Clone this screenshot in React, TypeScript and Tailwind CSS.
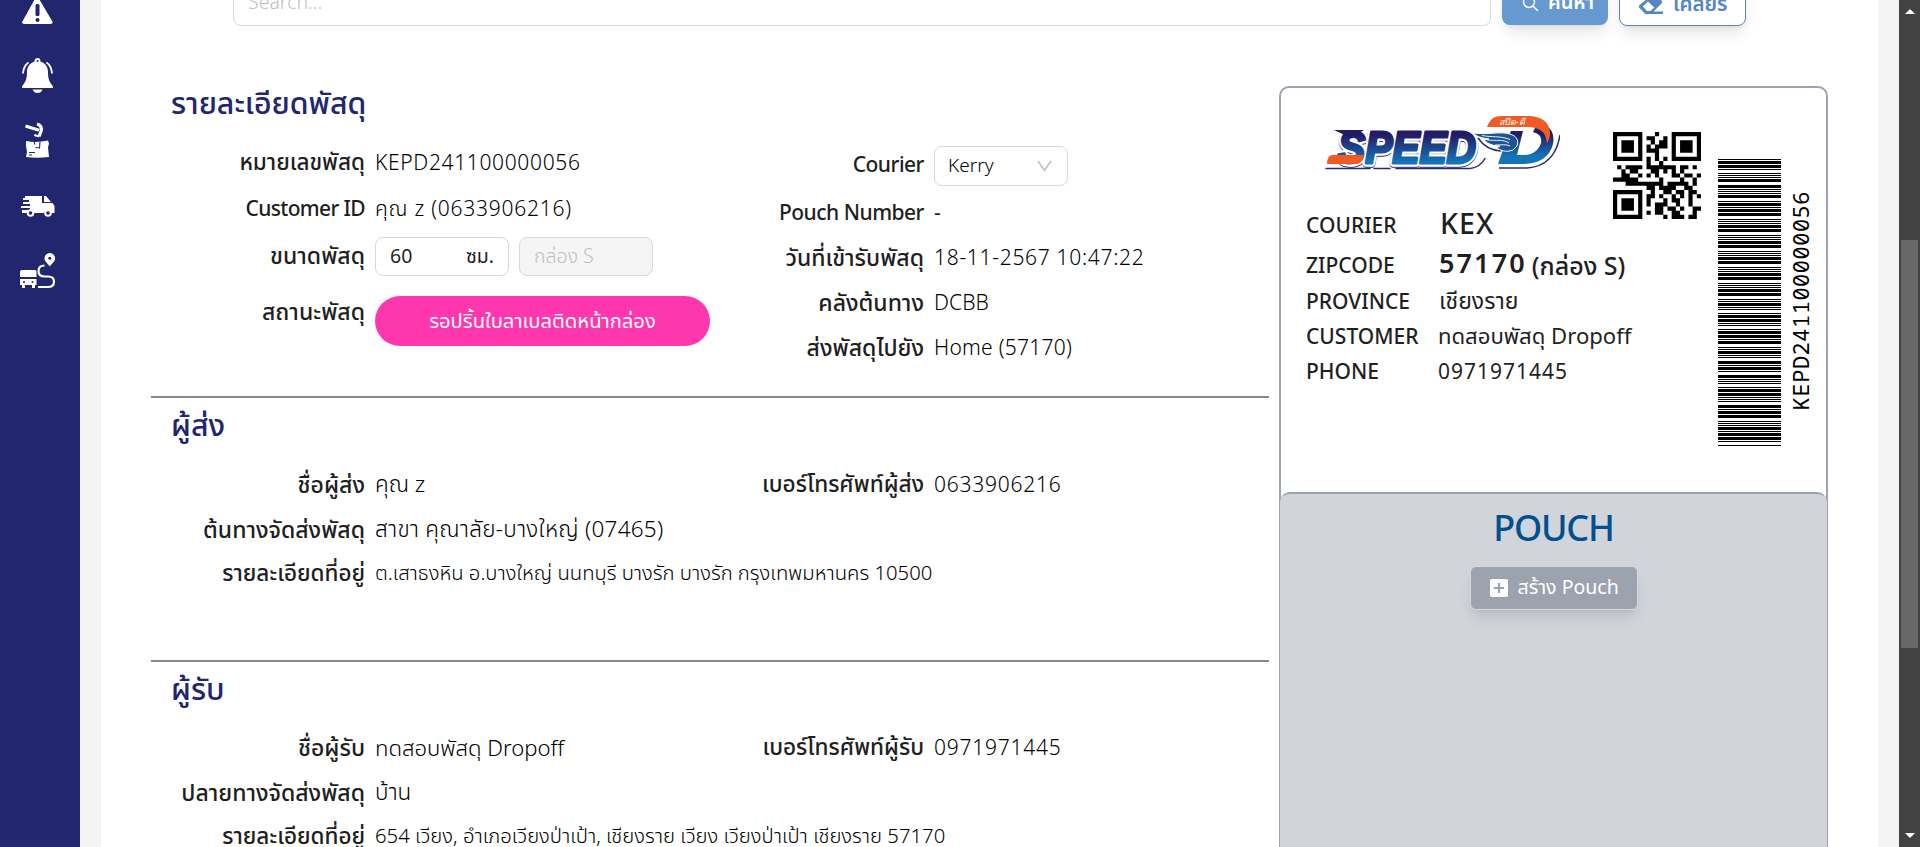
import type { ReactNode } from 'react';

const FONT = "font-['Noto_Sans','Noto_Sans_Thai',sans-serif]";

/* ---------- QR code (version 1, level Q, mask 6) ---------- */

const ALNUM = '0123456789ABCDEFGHIJKLMNOPQRSTUVWXYZ $%*+-./:';

function gfMul(a: number, b: number): number {
  let z = 0;
  for (let i = 7; i >= 0; i--) {
    z = (z << 1) ^ ((z >>> 7) * 0x11d);
    z ^= ((b >>> i) & 1) * a;
  }
  return z;
}

function qrMatrix(text: string): boolean[][] {
  const bits: number[] = [];
  const push = (v: number, n: number) => {
    for (let i = n - 1; i >= 0; i--) bits.push((v >>> i) & 1);
  };
  push(2, 4);
  push(text.length, 9);
  for (let i = 0; i + 1 < text.length; i += 2)
    push(ALNUM.indexOf(text[i]) * 45 + ALNUM.indexOf(text[i + 1]), 11);
  if (text.length % 2) push(ALNUM.indexOf(text[text.length - 1]), 6);
  while (bits.length < 104) bits.push(0);
  const data: number[] = [];
  for (let i = 0; i < 104; i += 8)
    data.push(parseInt(bits.slice(i, i + 8).join(''), 2));

  const deg = 13;
  const div = new Array<number>(deg).fill(0);
  div[deg - 1] = 1;
  let root = 1;
  for (let i = 0; i < deg; i++) {
    for (let j = 0; j < deg; j++) {
      div[j] = gfMul(div[j], root);
      if (j + 1 < deg) div[j] ^= div[j + 1];
    }
    root = gfMul(root, 2);
  }
  const rem = new Array<number>(deg).fill(0);
  for (const b of data) {
    const f = b ^ (rem.shift() as number);
    rem.push(0);
    div.forEach((c, i) => (rem[i] ^= gfMul(c, f)));
  }
  const all = [...data, ...rem];

  const n = 21;
  const m = Array.from({ length: n }, () => new Array<boolean>(n).fill(false));
  const fn = Array.from({ length: n }, () => new Array<boolean>(n).fill(false));
  const set = (x: number, y: number, v: boolean) => {
    m[y][x] = v;
    fn[y][x] = true;
  };
  for (let i = 0; i < n; i++) {
    set(6, i, i % 2 === 0);
    set(i, 6, i % 2 === 0);
  }
  for (const [cx, cy] of [[3, 3], [17, 3], [3, 17]])
    for (let dy = -4; dy <= 4; dy++)
      for (let dx = -4; dx <= 4; dx++) {
        const x = cx + dx;
        const y = cy + dy;
        const d = Math.max(Math.abs(dx), Math.abs(dy));
        if (x >= 0 && x < n && y >= 0 && y < n) set(x, y, d !== 2 && d !== 4);
      }
  const fmt = parseInt('010111011011010', 2);
  const bit = (i: number) => ((fmt >>> i) & 1) === 1;
  for (let i = 0; i <= 5; i++) set(8, i, bit(i));
  set(8, 7, bit(6));
  set(8, 8, bit(7));
  set(7, 8, bit(8));
  for (let i = 9; i < 15; i++) set(14 - i, 8, bit(i));
  for (let i = 0; i < 8; i++) set(n - 1 - i, 8, bit(i));
  for (let i = 8; i < 15; i++) set(8, n - 15 + i, bit(i));
  set(8, n - 8, true);

  let k = 0;
  for (let right = n - 1; right >= 1; right -= 2) {
    if (right === 6) right = 5;
    for (let v = 0; v < n; v++)
      for (let j = 0; j < 2; j++) {
        const x = right - j;
        const y = ((right + 1) & 2) === 0 ? n - 1 - v : v;
        if (!fn[y][x] && k < all.length * 8) {
          const on = ((all[k >>> 3] >>> (7 - (k & 7))) & 1) === 1;
          m[y][x] = on !== ((((x * y) % 2) + ((x * y) % 3)) % 2 === 0);
          k++;
        }
      }
  }
  return m;
}

function QrCode({ value }: { value: string }) {
  const d = qrMatrix(value)
    .flatMap((row, y) => row.map((on, x) => (on ? `M${x} ${y}h1v1h-1z` : '')))
    .join('');
  return (
    <svg viewBox="0 0 21 21" preserveAspectRatio="none" className="h-[87px] w-[88px]">
      <path d={d} fill="#000" />
    </svg>
  );
}

/* ---------- Code 39 barcode, running bottom to top ---------- */

const CODE39: Record<string, string> = {
  '0': 'nnnwwnwnn', '1': 'wnnwnnnnw', '2': 'nnwwnnnnw', '4': 'nnnwwnnnw',
  '5': 'wnnwwnnnn', '6': 'nnwwwnnnn', D: 'nnnnwwnnw', E: 'wnnnwwnnn',
  K: 'wnnnnnnww', P: 'nnwnwnnwn', '*': 'nwnnwnwnn',
};

function Barcode({ value }: { value: string }) {
  let pos = 0;
  const bars: { y: number; h: number }[] = [];
  for (const ch of `*${value}*`) {
    CODE39[ch].split('').forEach((c, i) => {
      const w = c === 'w' ? 3 : 1;
      if (i % 2 === 0) bars.push({ y: 288 - pos - w, h: w });
      pos += w;
    });
    pos += 1;
  }
  return (
    <svg width="63" height="288" viewBox="0 0 63 288">
      {bars.map((b) => (
        <rect key={b.y} x="0" y={b.y} width="63" height={b.h} fill="#000" />
      ))}
    </svg>
  );
}

/* ---------- Logo ---------- */

function Logo() {
  return (
    <svg width="236" height="60" viewBox="0 0 236 60">
      <defs>
        <linearGradient id="blue" x1="0" y1="0" x2="0" y2="1">
          <stop offset="0.25" stopColor="#231b66" />
          <stop offset="0.8" stopColor="#1573b8" />
        </linearGradient>
      </defs>
      <path d="M2 53.500h44M50 53.500h16M72 53.500h74q10-1 15-10" fill="none" stroke="#2a2a72" strokeWidth="1.500" strokeLinecap="round" />
      <g fontFamily="Liberation Sans" fontWeight="700" fontStyle="italic" strokeLinejoin="round">
        <text x="14" y="49" fontSize="44" textLength="138" lengthAdjust="spacingAndGlyphs" fill="#2a2a72" stroke="#2a2a72" strokeWidth="7.500">SPEED</text>
        <text x="14" y="48" fontSize="44" textLength="138" lengthAdjust="spacingAndGlyphs" fill="#fff" stroke="#fff" strokeWidth="7.500" aria-hidden="true">SPEED</text>
        <text x="14" y="47.500" fontSize="44" textLength="138" lengthAdjust="spacingAndGlyphs" fill="url(#blue)" stroke="url(#blue)" strokeWidth="3" aria-hidden="true">SPEED</text>
      </g>
      <path d="M10 15h30l-13 8z" fill="#231b66" />
      <path d="M9 40h31l-1 4q-2 5-8 5H3q0-9 6-9z" fill="#f15a22" />
      <path d="M175 53h28q28-2 33-33" fill="none" stroke="#2a2a72" strokeWidth="1.500" />
      <path d="M154 23q8 12 23 13" fill="none" stroke="#2a2a72" strokeWidth="1.500" />
      <path d="M187 16h12l-6 24h7c10 0 15-6 17-12 1-7-2-9-8-11l4-8c14 0 18 10 16 20-3 13-14 20-30 20h-25l7-20z" fill="url(#blue)" />
      <path d="M163 12c3-8 7-11 15-11h26c14 0 23 7 22 19-1 4-1 6-3 8-1-11-7-16-20-16z" fill="#f15a22" />
      <path d="M149 18c16 2 27-2 37 1 7 2 9 7 7 12l-4 4c-8 3-12 0-17-2 2-1 3-1 4-2-7 0-12-2-16-6l5-1c-7-1-12-2-16-6z" fill="#1d5494" stroke="#fff" strokeWidth="1" />
      <path d="M158 20.500c10 2 17 0 28 4M163 25c9 1 16-1 22 3M171 30c6 0 11-1 15 1" fill="none" stroke="#fff" strokeWidth="0.900" />
      <text x="175" y="9.500" fontSize="9" fontStyle="italic" textLength="26" lengthAdjust="spacingAndGlyphs" fill="#fff" className="font-['Noto_Sans',sans-serif]">สปีด-ดี</text>
    </svg>
  );
}

/* ---------- Sidebar ---------- */

function Sidebar() {
  return (
    <aside className="flex w-20 shrink-0 flex-col items-center bg-[#22266e]">
      <svg width="40" height="310" viewBox="0 0 40 310" fill="#fff">
        <path d="M14.600-.5q2.400-4 4.800 0l13 22q1 2.500-2 2.500h-26q-3 0-2-2.500z" />
        <g fill="#22266e">
          <rect x="15.500" y="4" width="4" height="12" rx="1.500" />
          <circle cx="17.500" cy="20" r="2" />
        </g>
        <path d="M17.500 58q3 0 3 3.400c5 1.600 7.500 5.600 7.500 10.600 0 7 1.500 10 5 14.500v1.500h-31v-1.500c3.500-4.500 5-7.500 5-14.500 0-5 2.500-9 7.500-10.600 0-3.400 3-3.400 3-3.400z" />
        <circle cx="17.500" cy="61" r="1" fill="#22266e" />
        <path d="M12.500 89.500h10q-1.500 3.500-5 3.500t-5-3.500z" />
        <path d="M8.500 62.500q-5 3.500-5.500 11M26.500 62.500q5 3.500 5.500 11" fill="none" stroke="#fff" strokeWidth="1.800" />
        <path d="M5.500 126l13.500 4.200" fill="none" stroke="#fff" strokeWidth="3" />
        <path d="M17 124q5.500 1.500 4 7.500l-2 5" fill="none" stroke="#fff" strokeWidth="3.200" />
        <path d="M14.500 134l5 1.500-1 2-4.500-1.500z" />
        <path d="M6 141q11 2 22-.500l1 3-1 4 1 9.500q-12 1.500-23 0l1-5-1-6z" />
        <path d="M14 142l1 2.500M15.500 147.500l4 .500.500-6M9 152.500h6M9 155h3" fill="none" stroke="#22266e" strokeWidth="1.100" />
        <path d="M5 196h17v7h10.500l2 3v7h-3.200a4 4 0 0 0-7.600 0h-9.400a4 4 0 0 0-7.600 0H2v-3h8v-2H1v-2h9v-2H3v-2h6v-2H3v-2h2z" />
        <path d="M24 196h2l5 6h-7z" />
        <circle cx="10.500" cy="213" r="2.800" stroke="#fff" strokeWidth="2" fill="#22266e" />
        <circle cx="28" cy="213" r="2.800" stroke="#fff" strokeWidth="2" fill="#22266e" />
        <path d="M2 270h13q1.500 0 1.500 2v5H0v-5q0-2 2-2zM0 279h16.500v6h-1.500v3h-3v-3h-7v3H2v-3H0z" />
        <g fill="#22266e"><circle cx="4" cy="282" r="1" /><circle cx="12.500" cy="282" r="1" /></g>
        <path d="M24.500 265.500q-6 0-6 5.500t6 5.500h3.500q6 0 6 5.200t-6 5.300H18" fill="none" stroke="#fff" strokeWidth="2.200" />
        <path d="M29.800 253a5.300 5.300 0 0 1 5.300 5.300c0 3.200-3 5-5.300 8.200-2.300-3.200-5.300-5-5.300-8.200a5.300 5.300 0 0 1 5.300-5.300z" />
        <circle cx="29.800" cy="258.300" r="1.500" fill="#22266e" />
      </svg>
    </aside>
  );
}

/* ---------- Detail rows ---------- */

interface RowProps {
  h: string;
  wide?: boolean;
  label: string;
  lt?: string;
  children?: ReactNode;
}

function Row({ h, wide = false, label, lt = 'text-[23px]', children }: RowProps) {
  return (
    <div className={`flex items-center ${wide ? 'gap-[10px]' : 'gap-[10px]'} ${h}`}>
      <div className={`flex shrink-0 justify-end pb-[2px] font-medium ${wide ? 'w-[214px]' : 'w-[203px]'}`}>
        <span className={lt}>{label}</span>
      </div>
      {children}
    </div>
  );
}

function Value({ t, children }: { t: string; children: ReactNode }) {
  return <span className={`pb-[2px] font-light text-black ${t}`}>{children}</span>;
}

function Heading({ children }: { children: ReactNode }) {
  return <h2 className="h-9 pl-5 text-[30.300px] leading-[34px] font-medium text-[#22266e]">{children}</h2>;
}

function LabelRow({ h, name, children }: { h: string; name: string; children: ReactNode }) {
  return (
    <div className={`flex items-center ${h}`}>
      <span className="w-[132px] shrink-0 font-medium">{name}</span>
      {children}
    </div>
  );
}

const LATIN = 'text-[21px] tracking-[-0.5px]';
const DIGITS = 'text-[21px] tracking-[0.75px]';

export default function App() {
  return (
    <div className={`flex h-[847px] w-full overflow-hidden bg-[#f4f4f4] text-[21px] leading-7 whitespace-nowrap text-[#1f1f1f] ${FONT}`}>
      <Sidebar />
      <main className="mr-[21px] ml-[21px] flex min-w-0 flex-1 flex-col bg-white">
        <div className="flex h-[26px] shrink-0 items-end pl-[132px]">
          <div className="flex h-12 w-[1258px] items-center rounded-lg border border-[#d9d9d9] pl-[14px] text-[19.5px] font-light text-[#bfbfbf]">
            <span>Search...</span>
          </div>
          <button className="mb-px ml-[11px] flex h-11 w-[106px] items-center gap-[9px] rounded-lg bg-[#6699d0] pl-5 text-[20px] font-semibold text-white shadow-lg">
            <svg width="17" height="17" viewBox="0 0 17 17" fill="none" stroke="#fff" strokeWidth="1.500"><circle cx="7" cy="7" r="5.500" /><path d="M11 11l5 5" /></svg>
            <span className="pb-[2px]">ค้นหา</span>
          </button>
          <button className="ml-[11px] flex h-11 w-[127px] items-center gap-[9px] rounded-lg border border-[#5487bf] bg-white pl-[18px] text-[20.5px] font-semibold text-[#5487bf] shadow-lg">
            <svg width="26" height="22" viewBox="0 0 26 22" fill="#5487bf"><path d="M14.500 1.500q1.500-1.300 3 0l6 6q1.400 1.500 0 3l-8 8H25V21H7.500L1.500 15q-1.400-1.500 0-3zM10 8.500l-5.200 5 4.200 4.500h3.500l3.800-3.600z" fillRule="evenodd" /></svg>
            <span className="pb-[2px]">เคลียร์</span>
          </button>
        </div>
        <div className="flex pt-[60px] pl-[50px]">
          <div className="w-[1118px] shrink-0">
            <section className="h-[312px] border-b-2 border-[#888]">
              <Heading>รายละเอียดพัสดุ</Heading>
              <div className="flex">
                <div className="w-[570px] pt-[18px]">
                  <Row wide h="h-[46px]" label="หมายเลขพัสดุ" lt="text-[22.500px]"><Value t="text-[21px] tracking-[0.65px]">KEPD241100000056</Value></Row>
                  <Row wide h="h-[46px]" label="Customer ID" lt="text-[21px] tracking-[-0.65px]"><Value t="text-[21px] tracking-[0.75px]">คุณ z (0633906216)</Value></Row>
                  <Row wide h="h-12" label="ขนาดพัสดุ">
                    <div className="flex gap-[10px] text-[19.5px]">
                      <div className="flex h-[39px] w-[134px] items-center justify-between rounded-lg border border-[#d9d9d9] pr-[14px] pl-[14px]"><span>60</span><span>ซม.</span></div>
                      <div className="flex h-[39px] w-[134px] items-center rounded-lg border border-[#d9d9d9] bg-[#f5f5f5] pl-[14px] font-light text-[#bfbfbf]"><span>กล่อง S</span></div>
                    </div>
                  </Row>
                  <div className="flex h-20 gap-[10px] pt-[16px]">
                    <div className="flex w-[214px] justify-end pt-px text-[23px] font-medium"><span>สถานะพัสดุ</span></div>
                    <div className="flex h-[50px] w-[335px] items-center justify-center rounded-[25px] bg-[#ff37af] pb-[2px] text-[20.200px] text-white"><span>รอปริ้นใบลาเบลติดหน้ากล่อง</span></div>
                  </div>
                </div>
                <div className="pt-[20px]">
                  <Row h="h-[48px]" label="Courier" lt={`relative -top-px ${LATIN}`}>
                    <div className="flex h-10 w-[134px] items-center justify-between rounded-lg border border-[#d9d9d9] pr-[15px] pl-[13px] text-[19px]">
                      <span className="pb-[3px] font-light text-black">Kerry</span>
                      <svg width="15" height="12" viewBox="0 0 15 12" fill="none" stroke="#bfbfbf" strokeWidth="1.500"><path d="M1 1l6.500 9.500L14 1" /></svg>
                    </div>
                  </Row>
                  <Row h="h-[45px]" label="Pouch Number" lt={LATIN}><span className="pb-[2px]">-</span></Row>
                  <Row h="h-[45px]" label="วันที่เข้ารับพัสดุ"><Value t="tracking-[0.7px]">18-11-2567 10:47:22</Value></Row>
                  <Row h="h-[45px]" label="คลังต้นทาง"><Value t="tracking-[0.1px]">DCBB</Value></Row>
                  <Row h="h-[45px]" label="ส่งพัสดุไปยัง"><Value t="tracking-[0.25px]">Home (57170)</Value></Row>
                </div>
              </div>
            </section>
            <section className="h-[264px] border-b-2 border-[#888] pt-[10px]">
              <Heading>ผู้ส่ง</Heading>
              <div className="flex pt-[18px]">
                <div className="w-[570px]">
                  <Row wide h="h-[45px]" label="ชื่อผู้ส่ง"><Value t="text-[22.500px]">คุณ z</Value></Row>
                  <Row wide h="h-[45px]" label="ต้นทางจัดส่งพัสดุ"><Value t="text-[22.500px] tracking-[0.25px]">สาขา คุณาลัย-บางใหญ่ (07465)</Value></Row>
                  <Row wide h="h-[44px]" label="รายละเอียดที่อยู่" lt="text-[22.500px]"><Value t="text-[20.300px] relative -top-px">ต.เสาธงหิน อ.บางใหญ่ นนทบุรี บางรัก บางรัก กรุงเทพมหานคร 10500</Value></Row>
                </div>
                <Row h="h-[45px]" label="เบอร์โทรศัพท์ผู้ส่ง" lt="text-[22.600px]"><Value t={DIGITS}>0633906216</Value></Row>
              </div>
            </section>
            <section className="pt-[10px]">
              <Heading>ผู้รับ</Heading>
              <div className="flex pt-[17px]">
                <div className="w-[570px]">
                  <Row wide h="h-[45px]" label="ชื่อผู้รับ"><Value t="text-[22.100px]">ทดสอบพัสดุ Dropoff</Value></Row>
                  <Row wide h="h-[45px]" label="ปลายทางจัดส่งพัสดุ"><Value t="text-[22.500px]">บ้าน</Value></Row>
                  <Row wide h="h-[44px]" label="รายละเอียดที่อยู่" lt="text-[22.500px]"><Value t="text-[20.300px] relative -top-px">654 เวียง, อำเภอเวียงป่าเป้า, เชียงราย เวียง เวียงป่าเป้า เชียงราย 57170</Value></Row>
                </div>
                <Row h="h-[45px]" label="เบอร์โทรศัพท์ผู้รับ" lt="text-[22.600px]"><Value t={DIGITS}>0971971445</Value></Row>
              </div>
            </section>
          </div>
          <div className="ml-[10px] h-[800px] w-[549px] rounded-t-[10px] border-2 border-[#9ca3af]">
            <div className="flex h-[404px]">
              <div className="w-[322px] pl-[25px]">
                <div className="pt-[27px] pl-[18px]"><Logo /></div>
                <div className="pt-[29px]">
                  <LabelRow h="h-[42px]" name="COURIER"><span className="pb-[5px] pl-[2px] text-[28.500px] font-medium tracking-[1px]">KEX</span></LabelRow>
                  <LabelRow h="h-[37px]" name="ZIPCODE"><span className="pb-[3px] pl-px text-[27px] font-semibold tracking-[2.100px]">57170</span><span className="ml-[5px] text-[25px] font-medium">(กล่อง S)</span></LabelRow>
                  <LabelRow h="h-[35px]" name="PROVINCE"><span className="pb-[2px] pl-px text-[23px]">เชียงราย</span></LabelRow>
                  <LabelRow h="h-[35px]" name="CUSTOMER"><span className="pb-[2px] text-[22.100px]">ทดสอบพัสดุ Dropoff</span></LabelRow>
                  <LabelRow h="h-[35px]" name="PHONE"><span className="tracking-[1px]">0971971445</span></LabelRow>
                </div>
              </div>
              <div className="pt-[44px] pl-[10px]"><QrCode value="KEPD241100000056" /></div>
              <div className="pt-[70px] pl-[17px]"><Barcode value="KEPD241100000056" /></div>
              <div className="flex h-[288px] w-[37px] items-center justify-center pt-[138px]">
                <span className="rotate-180 font-['Noto_Sans_Mono','DejaVu_Sans_Mono',monospace] text-[22px] leading-7 tracking-[0.500px] text-black [writing-mode:vertical-rl]">KEPD241100000056</span>
              </div>
            </div>
            <div className="-mx-px flex h-[400px] flex-col items-center rounded-t-[10px] border-t-2 border-[#9ca3af] bg-[#d1d5db] pt-[10px]">
              <div className="h-12 text-[36px] leading-[48px] font-medium tracking-[-1.200px] text-[#00508f]">POUCH</div>
              <button className="mt-[14px] flex h-[44px] w-[168px] items-center gap-[10px] rounded-md border border-[#d9d9d9] bg-[#9ca3af] pl-[19px] text-[19.500px] text-white shadow-lg">
                <svg width="18" height="18" viewBox="0 0 18 18"><rect width="18" height="18" rx="2" fill="#fff" /><path d="M9 4v10M4 9h10" stroke="#9ca3af" strokeWidth="2.200" /></svg>
                <span className="pb-[2px]">สร้าง Pouch</span>
              </button>
            </div>
          </div>
        </div>
      </main>
      <div className="flex w-[21px] shrink-0 flex-col items-center bg-[#424242] py-[8px]">
        <svg className="shrink-0" width="10" height="6" viewBox="0 0 10 6" fill="#fff"><path d="M0 6l5-5 5 5z" /></svg>
        <div className="mt-[226px] mb-auto h-[408px] w-[17px] bg-[#686868]" />
        <svg className="shrink-0" width="10" height="6" viewBox="0 0 10 6" fill="#fff"><path d="M0 0l5 5 5-5z" /></svg>
      </div>
    </div>
  );
}
